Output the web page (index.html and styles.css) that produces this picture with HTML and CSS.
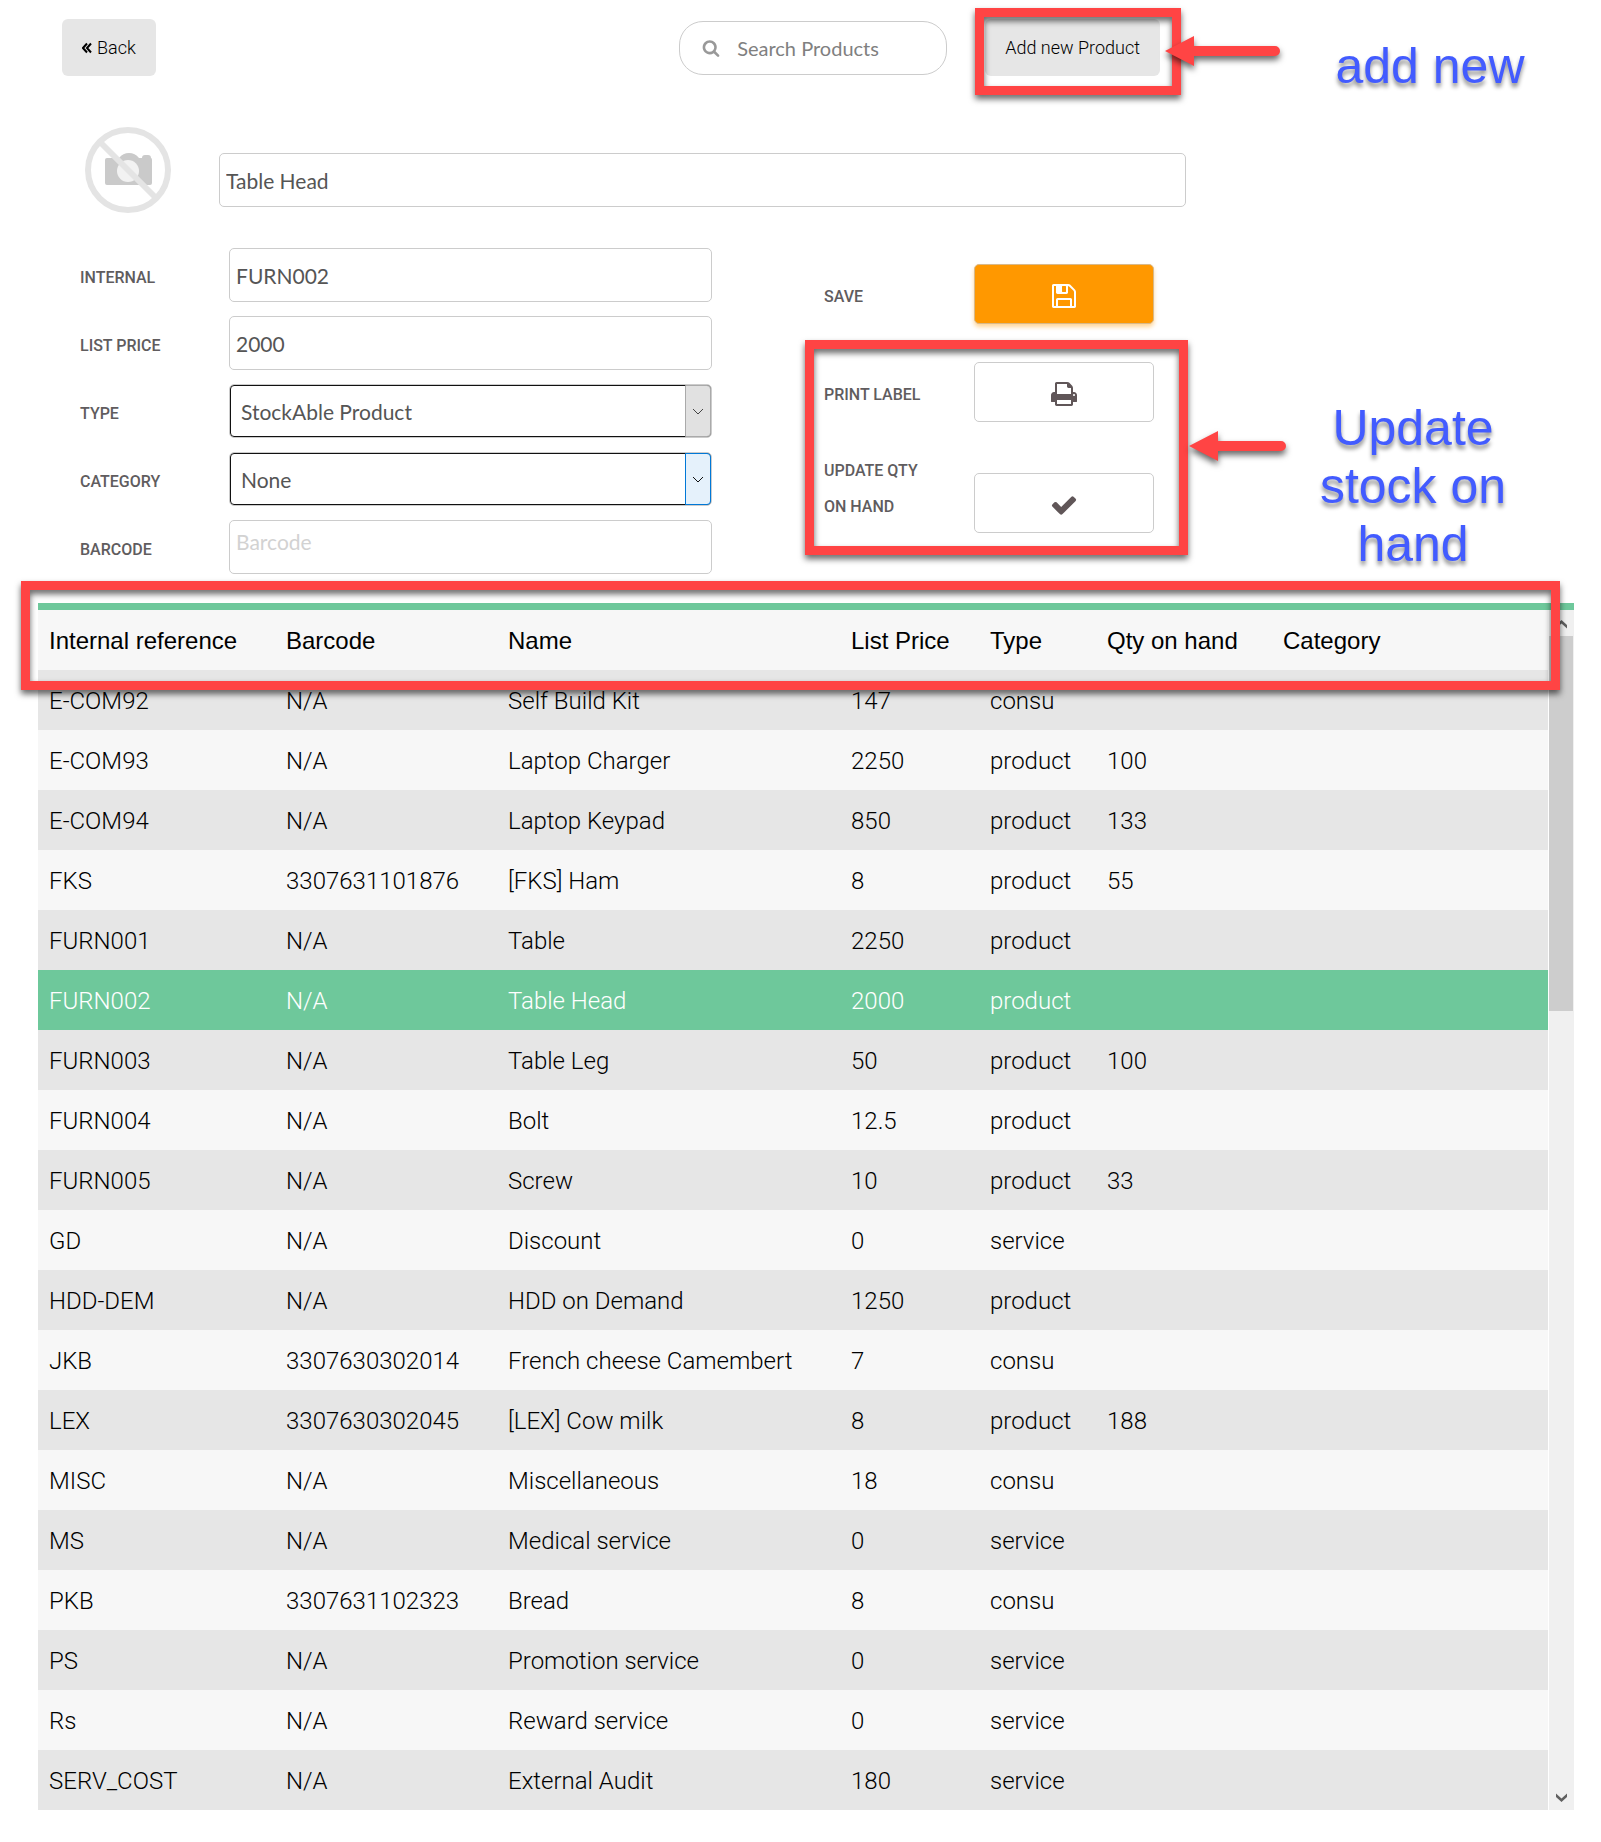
FILE: index.html
```html
<!DOCTYPE html>
<html lang="en">
<head>
<meta charset="utf-8">
<title>Products</title>
<link rel="stylesheet" href="styles.css">
</head>
<body>
<main class="page">
  <div class="top">
    <div class="editor">
      <header class="toolbar">
        <button class="btn" type="button"><svg class="back-icon" viewBox="0 0 10 12" aria-hidden="true"><path d="M5 1.5 1 6l4 4.500M9 1.500 5 6l4 4.500"/></svg>Back</button>
        <label class="search">
          <svg class="search-icon" viewBox="0 0 1792 1792" aria-hidden="true"><path d="M1216 832q0-185-131.500-316.500t-316.500-131.500-316.500 131.500-131.500 316.500 131.500 316.500 316.500 131.500 316.500-131.500 131.500-316.500zm512 832q0 52-38 90t-90 38q-54 0-90-38l-343-342q-179 124-399 124-143 0-273.500-55.500t-225-150-150-225-55.500-273.500 55.500-273.500 150-225 225-150 273.500-55.500 273.500 55.500 225 150 150 225 55.500 273.500q0 220-124 399l343 343q37 37 37 90z"/></svg>
          <input type="search" placeholder="Search Products" aria-label="Search Products">
        </label>
        <div class="add-new">
          <button class="btn" type="button">Add new Product</button>
          <span class="highlight"></span>
          <svg class="arrow" width="115" height="30" viewBox="0 0 115 30" aria-hidden="true"><path d="M0 15 29 0V10H110a5 5 0 0 1 0 10H29V30z"/></svg>
        </div>
      </header>

      <div class="identity">
        <svg class="photo" viewBox="0 0 86 86" aria-label="No picture">
          <path fill="#cacaca" d="M20 33q0-2 2-2h12q4-5 10-5t10 5h3q0-3 3-3h3q3 0 3 3 1 0 1 2v23q0 2-2 2H22q-2 0-2-2z"/>
          <circle cx="43" cy="44" r="11" fill="#f2f2f2"/>
          <circle cx="43" cy="43" r="40" fill="none" stroke="#e4e4e4" stroke-width="6"/>
          <path d="M15 15 71 71" stroke="#e4e4e4" stroke-width="6"/>
        </svg>
        <input class="field" type="text" value="Table Head" aria-label="Name">
      </div>

      <div class="details">
        <div class="fields">
          <label class="caption" for="internal">INTERNAL</label>
          <input class="field" id="internal" type="text" value="FURN002">
          <label class="caption" for="price">LIST PRICE</label>
          <input class="field" id="price" type="text" value="2000">
          <label class="caption" for="type">TYPE</label>
          <div class="dropdown">
            <select id="type"><option>StockAble Product</option></select>
            <span class="drop"><svg viewBox="0 0 12 7" aria-hidden="true"><path d="M1 1l5 5 5-5"/></svg></span>
          </div>
          <label class="caption" for="category">CATEGORY</label>
          <div class="dropdown hover">
            <select id="category"><option>None</option></select>
            <span class="drop"><svg viewBox="0 0 12 7" aria-hidden="true"><path d="M1 1l5 5 5-5"/></svg></span>
          </div>
          <label class="caption" for="barcode">BARCODE</label>
          <input class="field barcode" id="barcode" type="text" placeholder="Barcode">
        </div>

        <div class="actions">
          <div class="action">
            <label class="caption" for="save">SAVE</label>
            <button class="act save" id="save" type="button"><svg viewBox="0 0 1792 1792" aria-hidden="true"><path d="M512 1536h768v-384h-768v384zm896 0h128v-896q0-14-10-38.500t-20-34.500l-281-281q-10-10-34-20t-39-10v416q0 40-28 68t-68 28h-576q-40 0-68-28t-28-68v-416h-128v1280h128v-416q0-40 28-68t68-28h832q40 0 68 28t28 68v416zm-384-928v-320q0-13-9.500-22.500t-22.500-9.500h-192q-13 0-22.500 9.500t-9.500 22.500v320q0 13 9.500 22.500t22.500 9.500h192q13 0 22.500-9.500t9.500-22.500zm640 32v928q0 40-28 68t-68 28h-1344q-40 0-68-28t-28-68v-1344q0-40 28-68t68-28h928q40 0 88 20t76 48l280 280q28 28 48 76t20 88z"/></svg></button>
          </div>
          <div class="stock">
            <div class="action">
              <label class="caption" for="print">PRINT LABEL</label>
              <button class="act" id="print" type="button"><svg viewBox="0 0 1792 1792" aria-hidden="true"><path d="M448 1536h896v-256h-896v256zm0-640h896v-384h-160q-40 0-68-28t-28-68v-160h-640v640zm1152 64q0-26-19-45t-45-19-45 19-19 45 19 45 45 19 45-19 19-45zm128 0v416q0 13-9.500 22.500t-22.500 9.500h-224v160q0 40-28 68t-68 28h-960q-40 0-68-28t-28-68v-160h-224q-13 0-22.500-9.500t-9.500-22.500v-416q0-79 56.500-135.500t135.500-56.500h64v-544q0-40 28-68t68-28h672q40 0 88 20t76 48l152 152q28 28 48 76t20 88v256h64q79 0 135.500 56.500t56.500 135.500z"/></svg></button>
            </div>
            <div class="action tall">
              <label class="caption" for="update">UPDATE QTY<br>ON HAND</label>
              <button class="act" id="update" type="button"><svg viewBox="0 0 1792 1792" aria-hidden="true"><path d="M1671 566q0 40-28 68l-724 724-136 136q-28 28-68 28t-68-28l-136-136-362-362q-28-28-28-68t28-68l136-136q28-28 68-28t68 28l294 295 656-657q28-28 68-28t68 28l136 136q28 28 28 68z"/></svg></button>
            </div>
            <span class="highlight"></span>
            <svg class="arrow" width="97" height="30" viewBox="0 0 97 30" aria-hidden="true"><path d="M0 15 29 0V10H92a5 5 0 0 1 0 10H29V30z"/></svg>
          </div>
        </div>
      </div>
    </div>

    <aside class="notes">
      <p class="note note-add">add new</p>
      <p class="note">Update stock on hand</p>
    </aside>
  </div>

  <section class="list">
    <table class="products">
      <colgroup><col class="c-ref"><col class="c-bar"><col class="c-name"><col class="c-price"><col class="c-type"><col class="c-qty"><col></colgroup>
      <thead>
        <tr><th>Internal reference</th><th>Barcode</th><th>Name</th><th>List Price</th><th>Type</th><th>Qty on hand</th><th>Category</th></tr>
      </thead>
      <tbody>
        <tr><td>E-COM92</td><td>N/A</td><td>Self Build Kit</td><td>147</td><td>consu</td><td></td><td></td></tr>
        <tr><td>E-COM93</td><td>N/A</td><td>Laptop Charger</td><td>2250</td><td>product</td><td>100</td><td></td></tr>
        <tr><td>E-COM94</td><td>N/A</td><td>Laptop Keypad</td><td>850</td><td>product</td><td>133</td><td></td></tr>
        <tr><td>FKS</td><td>3307631101876</td><td>[FKS] Ham</td><td>8</td><td>product</td><td>55</td><td></td></tr>
        <tr><td>FURN001</td><td>N/A</td><td>Table</td><td>2250</td><td>product</td><td></td><td></td></tr>
        <tr class="selected"><td>FURN002</td><td>N/A</td><td>Table Head</td><td>2000</td><td>product</td><td></td><td></td></tr>
        <tr><td>FURN003</td><td>N/A</td><td>Table Leg</td><td>50</td><td>product</td><td>100</td><td></td></tr>
        <tr><td>FURN004</td><td>N/A</td><td>Bolt</td><td>12.5</td><td>product</td><td></td><td></td></tr>
        <tr><td>FURN005</td><td>N/A</td><td>Screw</td><td>10</td><td>product</td><td>33</td><td></td></tr>
        <tr><td>GD</td><td>N/A</td><td>Discount</td><td>0</td><td>service</td><td></td><td></td></tr>
        <tr><td>HDD-DEM</td><td>N/A</td><td>HDD on Demand</td><td>1250</td><td>product</td><td></td><td></td></tr>
        <tr><td>JKB</td><td>3307630302014</td><td>French cheese Camembert</td><td>7</td><td>consu</td><td></td><td></td></tr>
        <tr><td>LEX</td><td>3307630302045</td><td>[LEX] Cow milk</td><td>8</td><td>product</td><td>188</td><td></td></tr>
        <tr><td>MISC</td><td>N/A</td><td>Miscellaneous</td><td>18</td><td>consu</td><td></td><td></td></tr>
        <tr><td>MS</td><td>N/A</td><td>Medical service</td><td>0</td><td>service</td><td></td><td></td></tr>
        <tr><td>PKB</td><td>3307631102323</td><td>Bread</td><td>8</td><td>consu</td><td></td><td></td></tr>
        <tr><td>PS</td><td>N/A</td><td>Promotion service</td><td>0</td><td>service</td><td></td><td></td></tr>
        <tr><td>Rs</td><td>N/A</td><td>Reward service</td><td>0</td><td>service</td><td></td><td></td></tr>
        <tr><td>SERV_COST</td><td>N/A</td><td>External Audit</td><td>180</td><td>service</td><td></td><td></td></tr>
      </tbody>
    </table>
    <div class="scrollbar" aria-hidden="true">
      <svg viewBox="0 0 11 9"><path d="M0 8.500V5L5.500 0 11 5V8.500L5.500 3.500z"/></svg>
      <span class="thumb"></span>
      <svg viewBox="0 0 11 9"><path d="M0 .5V4l5.500 5L11 4V.5L5.500 5.500z"/></svg>
    </div>
    <span class="highlight"></span>
  </section>
</main>
</body>
</html>
```

FILE: styles.css
```css
* { box-sizing: border-box; }

body {
  margin: 0;
  background: #fff;
  color: #000;
  font-family: Roboto, "Liberation Sans", sans-serif;
}

button, input, select { font: inherit; color: inherit; margin: 0; }

.page { padding: 0 27px 32px 38px; }

.top {
  display: grid;
  grid-template-columns: minmax(0, 1fr) 388px;
  margin-bottom: 29px;
}

/* toolbar */
.toolbar {
  display: flex;
  align-items: center;
  padding: 19px 26px 0 24px;
}

.btn {
  display: block;
  height: 57px;
  padding: 0 20px;
  border: 0;
  border-radius: 6px;
  background: #e6e6e6;
  color: #000;
  font-size: 18px;
  font-weight: 300;
  white-space: nowrap;
}

.back-icon {
  width: 10px;
  height: 12px;
  margin-right: 5px;
  fill: none;
  stroke: #000;
  stroke-width: 2;
}

.search {
  display: flex;
  align-items: center;
  gap: 17px;
  width: 268px;
  height: 54px;
  margin: 0 38px 0 auto;
  padding: 0 22px;
  border: 1px solid #ccc;
  border-radius: 24px;
}

.search-icon { flex: none; width: 18px; height: 18px; fill: #999; }

.search input {
  min-width: 0;
  width: 100%;
  padding: 0;
  border: 0;
  outline: 0;
  background: none;
  font-family: Lato, sans-serif;
  font-size: 20px;
}

.search input::placeholder { color: #808080; }

.add-new { position: relative; }
.add-new .highlight { inset: -11px -21px -19px -10px; }
.add-new .arrow { left: 180px; top: 17px; }

/* annotations */
.highlight {
  position: absolute;
  border: 9px solid #f44;
  filter: drop-shadow(0 4px 3px rgba(0, 0, 0, .6));
  pointer-events: none;
}

.arrow {
  position: absolute;
  overflow: visible;
  fill: #f44;
  filter: drop-shadow(0 4px 3px rgba(0, 0, 0, .6));
}

.notes { padding: 37px 0 0 117px; }

.note {
  width: 220px;
  margin: 0;
  color: #425bff;
  font-family: "Liberation Sans", Arial, sans-serif;
  font-size: 50px;
  line-height: 58px;
  text-align: center;
  text-shadow: 0 4px 4px rgba(0, 0, 0, .45);
}

.note-add { margin: 0 0 304px 17px; }

/* form */
.identity {
  display: flex;
  align-items: flex-end;
  gap: 48px;
  padding-left: 47px;
  margin: 51px 0 35px;
}

.photo { flex: none; width: 86px; height: 86px; }

.identity .field { margin-bottom: 6px; }

.field {
  display: block;
  width: 100%;
  height: 54px;
  padding: 0 6px;
  border: 1px solid #ccc;
  border-radius: 5px;
  background: #fff;
  color: #555;
  font-family: Lato, sans-serif;
  font-size: 21px;
}

.field::placeholder { color: #d2d2d2; }
.barcode { padding-bottom: 12px; }

.details {
  display: flex;
  align-items: flex-start;
  gap: 112px;
  padding: 0 32px 0 42px;
}

.fields {
  flex: 1;
  display: grid;
  grid-template-columns: 149px minmax(0, 1fr);
  row-gap: 14px;
  align-items: center;
}

.caption {
  padding-top: 5px;
  color: #605c5e;
  font-size: 16px;
  font-weight: 500;
  line-height: 36px;
}

.dropdown {
  position: relative;
  height: 54px;
  border: 1px solid #ccc;
  border-radius: 5px;
}

.dropdown select {
  appearance: none;
  display: block;
  width: 100%;
  height: 52px;
  padding: 0 32px 0 10px;
  border: 1px solid #111;
  border-radius: 4px;
  background: #fff;
  color: #555;
  font-family: Lato, sans-serif;
  font-size: 21px;
}

.drop {
  position: absolute;
  inset: 0 0 0 auto;
  display: grid;
  place-items: center;
  width: 26px;
  border: 1px solid #aaa;
  border-radius: 0 4px 4px 0;
  background: #e1e1e1;
  pointer-events: none;
}

.drop svg { width: 12px; height: 7px; fill: none; stroke: #444; }
.hover .drop { border-color: #0078d7; background: #e5f1fb; }
.hover .drop svg { stroke: #111; }

.actions {
  display: grid;
  gap: 38px;
  width: 330px;
  padding-top: 16px;
}

.action {
  display: grid;
  grid-template-columns: 150px minmax(0, 1fr);
  align-items: center;
}

.stock { position: relative; display: grid; gap: 31px; }
.stock .highlight { inset: -22px -34px -22px -19px; }
.stock .arrow { left: 365px; top: 69px; }

.tall { height: 80px; align-items: end; }
.tall .caption { align-self: start; padding-top: 0; }

.act {
  display: grid;
  place-items: center;
  height: 60px;
  padding: 4px 0 0;
  border: 1px solid #ccc;
  border-radius: 5px;
  background: #fff;
}

.act svg { width: 28px; height: 28px; fill: #605658; }

.save {
  border-color: #d8b98a;
  background: #ff9800;
  box-shadow: 0 3px 4px rgba(255, 152, 0, .4);
}

.save svg { fill: #fff; }

/* product list */
.list {
  position: relative;
  display: flex;
  gap: 1px;
  border-top: 7px solid #6ec89b;
}

.list .highlight { inset: -29px 14px auto -17px; height: 109px; }

.products {
  flex: 1;
  table-layout: fixed;
  border-collapse: collapse;
  font-size: 24px;
}

.c-ref { width: 237px; }
.c-bar { width: 222px; }
.c-name { width: 343px; }
.c-price { width: 139px; }
.c-type { width: 117px; }
.c-qty { width: 176px; }

.products th, .products td {
  height: 60px;
  padding: 2px 0 0 11px;
  text-align: left;
  white-space: nowrap;
}

.products th {
  font-family: "Liberation Sans", Arial, sans-serif;
  font-weight: 400;
}

.products td { font-weight: 300; }
.products tr { background: #f7f7f7; }
.products tbody tr:nth-child(odd) { background: #e6e6e6; }
.products tbody .selected { background: #6ec89b; color: #fff; }

.scrollbar {
  display: flex;
  flex-direction: column;
  align-items: center;
  width: 25px;
  padding: 10px 0 8px;
  background: #f0f0f0;
}

.scrollbar svg { width: 11px; height: 9px; fill: #606060; }

.thumb {
  width: 24px;
  height: 375px;
  margin: 7px 1px auto 0;
  background: #cdcdcd;
}
```
